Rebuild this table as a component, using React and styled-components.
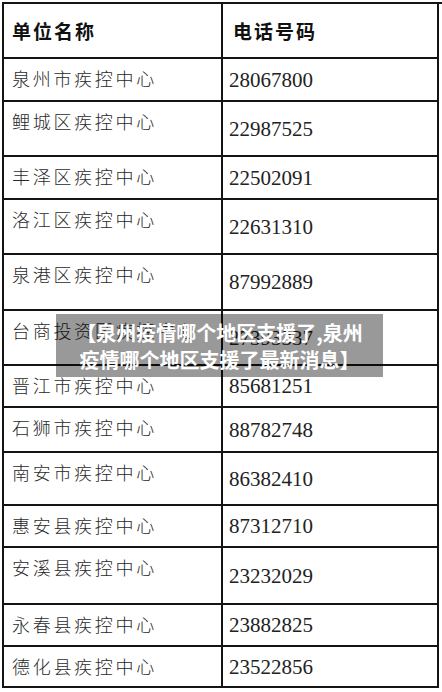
import React from 'react';
import styled, { createGlobalStyle } from 'styled-components';

const GlobalStyle = createGlobalStyle`
  html, body {
    margin: 0;
    padding: 0;
    background: #fff;
  }
`;

const Page = styled.div`
  position: relative;
  width: 442px;
  height: 692px;
  overflow: hidden;
  background: #fff;
`;

const Table = styled.div`
  display: grid;
  grid-template-columns: 219px 216px;
  margin: 2px 0 0 2px;
  border-top: 2px solid #141414;
  border-left: 2px solid #141414;
`;

const Cell = styled.div`
  box-sizing: border-box;
  height: ${({ height }) => height}px;
  border-right: 2px solid #141414;
  border-bottom: 2px solid #141414;
  display: flex;
  align-items: ${({ top }) => (top ? 'flex-start' : 'center')};
  padding: ${({ top }) => (top ? '6px 0 0 8px' : '0 0 0 6px')};
`;

const HeadText = styled.span`
  font-family: 'Noto Sans CJK SC', 'Noto Sans', sans-serif;
  font-weight: 700;
  font-size: 19px;
  letter-spacing: 2px;
  color: #111;
  line-height: 26px;
  padding-left: ${({ indent }) => indent || 0}px;
`;

const NameText = styled.span`
  font-family: 'Noto Sans CJK SC', 'Noto Sans', sans-serif;
  font-weight: 300;
  font-size: 18px;
  letter-spacing: 2.7px;
  color: #2a2a2a;
  line-height: 26px;
`;

const PhoneText = styled.span`
  font-family: 'Liberation Serif', 'Times New Roman', serif;
  font-size: 21px;
  color: #222;
  line-height: 26px;
`;

const Caption = styled.div`
  position: absolute;
  top: 314px;
  left: 56px;
  width: 327px;
  height: 63px;
  background: rgba(0, 0, 0, 0.4);
  display: flex;
  flex-direction: column;
  align-items: center;
  justify-content: center;
  font-family: 'Noto Sans CJK SC', 'Noto Sans', sans-serif;
  font-weight: 700;
  font-size: 20px;
  line-height: 27px;
  color: #fff;
  text-align: center;
`;

const rows = [
  ['泉州市疾控中心', '28067800', 43],
  ['鲤城区疾控中心', '22987525', 55],
  ['丰泽区疾控中心', '22502091', 43],
  ['洛江区疾控中心', '22631310', 55],
  ['泉港区疾控中心', '87992889', 56],
  ['台商投资区疾控中心', '27393337', 55],
  ['晋江市疾控中心', '85681251', 42],
  ['石狮市疾控中心', '88782748', 45],
  ['南安市疾控中心', '86382410', 53],
  ['惠安县疾控中心', '87312710', 42],
  ['安溪县疾控中心', '23232029', 57],
  ['永春县疾控中心', '23882825', 42],
  ['德化县疾控中心', '23522856', 41],
];

const App = () => (
  <Page>
    <GlobalStyle />
    <Table>
      <Cell height={55}>
        <HeadText indent={2}>单位名称</HeadText>
      </Cell>
      <Cell height={55}>
        <HeadText indent={4}>电话号码</HeadText>
      </Cell>
      {rows.map(([name, phone, height]) => (
        <React.Fragment key={name}>
          <Cell height={height} top>
            <NameText>{name}</NameText>
          </Cell>
          <Cell height={height}>
            <PhoneText>{phone}</PhoneText>
          </Cell>
        </React.Fragment>
      ))}
    </Table>
    <Caption>
      <span>【泉州疫情哪个地区支援了,泉州</span>
      <span>疫情哪个地区支援了最新消息】</span>
    </Caption>
  </Page>
);

export default App;
